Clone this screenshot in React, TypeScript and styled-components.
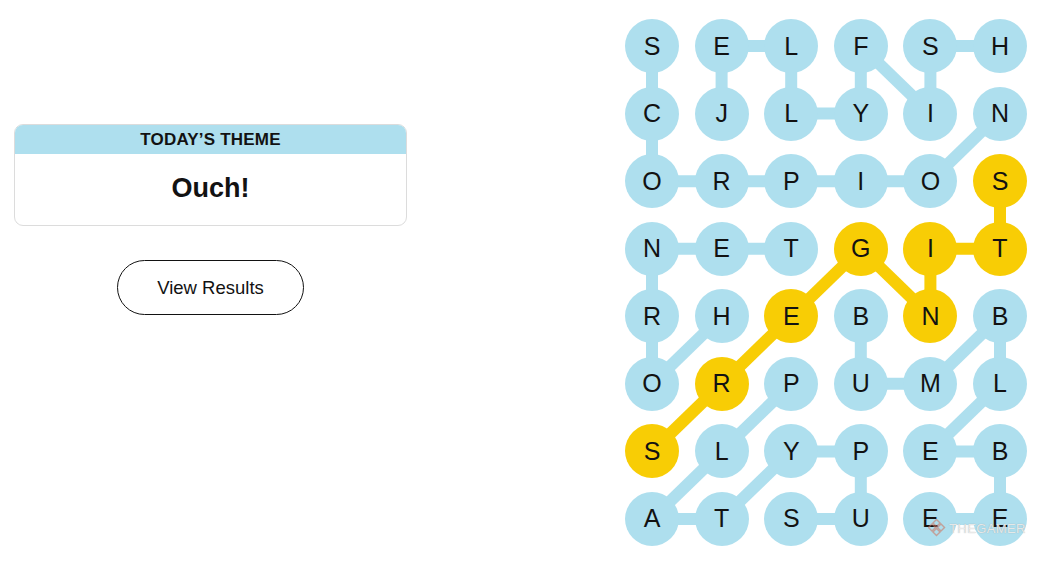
import React from "react";
import styled, { createGlobalStyle } from "styled-components";

const GlobalStyle = createGlobalStyle`
  html, body { margin: 0; padding: 0; background: #ffffff; }
  body { font-family: "Liberation Sans", Arial, sans-serif; color: #121212; }
`;

const COL = 69.6;
const ROW = 67.57;
const R = 27;
const BLUE = "#aedfee";
const YELLOW = "#f8cd05";

const LETTERS = [
  "SELFSH",
  "CJLYIN",
  "ORPIOS",
  "NETGIT",
  "RHEBNB",
  "ORPUML",
  "SLYPEB",
  "ATSUEE",
];

type Pt = [number, number];
type Word = { path: Pt[]; spangram?: boolean };

const WORDS: Word[] = [
  { path: [[0, 0], [0, 1], [0, 2], [1, 2], [2, 2], [3, 2], [4, 2], [5, 1]] },
  { path: [[1, 1], [1, 0], [2, 0], [2, 1], [3, 1], [3, 0], [4, 1], [4, 0], [5, 0]] },
  { path: [[1, 4], [0, 5], [0, 4], [0, 3], [1, 3], [2, 3]] },
  { path: [[2, 5], [1, 6], [0, 7], [1, 7], [2, 6], [3, 6], [3, 7], [2, 7]] },
  { path: [[3, 4], [3, 5], [4, 5], [5, 4], [5, 5], [4, 6], [5, 6], [5, 7], [4, 7]] },
  { path: [[0, 6], [1, 5], [2, 4], [3, 3], [4, 4], [4, 3], [5, 3], [5, 2]], spangram: true },
];

const spangramCells = new Set(
  WORDS.filter((w) => w.spangram).flatMap((w) => w.path.map(([c, r]) => `${c},${r}`))
);

const Page = styled.main`
  display: flex;
  width: 1053px;
  height: 563px;
  box-sizing: border-box;
  padding-right: 26px;
  overflow: hidden;
`;

const Side = styled.section`
  width: 421px;
  box-sizing: border-box;
  padding: 124px 14px 0;
  display: flex;
  flex-direction: column;
  align-items: center;
  gap: 34px;
`;

const ThemeCard = styled.div`
  width: 100%;
  border: 1px solid #dcdcdc;
  border-radius: 9px;
  overflow: hidden;
  box-sizing: border-box;
`;

const ThemeHeader = styled.div`
  height: 29px;
  background: ${BLUE};
  display: flex;
  align-items: center;
  justify-content: center;
  font-weight: 700;
  font-size: 17px;
  letter-spacing: 0.2px;
  color: #121212;
`;

const ThemeTitle = styled.div`
  height: 71px;
  display: flex;
  align-items: center;
  justify-content: center;
  font-weight: 700;
  font-size: 27px;
  color: #121212;
  padding-bottom: 2px;
  box-sizing: border-box;
`;

const ResultsButton = styled.button`
  width: 187px;
  height: 55px;
  border: 1px solid #121212;
  border-radius: 28px;
  background: #ffffff;
  font-family: "Liberation Sans", Arial, sans-serif;
  font-size: 18.5px;
  color: #121212;
  cursor: pointer;
`;

const BoardWrap = styled.section`
  margin-left: auto;
  padding-top: 19px;
`;

const Board = styled.div`
  position: relative;
  display: grid;
  grid-template-columns: repeat(6, ${R * 2}px);
  grid-auto-rows: ${R * 2}px;
  column-gap: ${COL - R * 2}px;
  row-gap: ${ROW - R * 2}px;
`;

const Connectors = styled.svg`
  position: absolute;
  inset: 0;
  width: 100%;
  height: 100%;
  z-index: 0;
  overflow: visible;
`;

const Cell = styled.div<{ $spangram: boolean }>`
  position: relative;
  z-index: 1;
  width: ${R * 2}px;
  height: ${R * 2}px;
  border-radius: 50%;
  background: ${(p) => (p.$spangram ? YELLOW : BLUE)};
  display: flex;
  align-items: center;
  justify-content: center;
  font-family: "Liberation Sans", Arial, sans-serif;
  font-size: 25px;
  color: #121212;
  line-height: 1;
`;

const Watermark = styled.div`
  position: absolute;
  left: 303px;
  top: 500px;
  z-index: 2;
  display: flex;
  align-items: center;
  gap: 3px;
  font-family: "Liberation Sans", Arial, sans-serif;
  font-size: 13px;
  letter-spacing: 0.4px;
  color: rgba(240, 240, 240, 0.9);
  text-shadow: 0 0 1px rgba(140, 140, 140, 0.7);
  pointer-events: none;
`;

const cx = (c: number) => R + c * COL;
const cy = (r: number) => R + r * ROW;

export default function App() {
  return (
    <>
      <GlobalStyle />
      <Page>
        <Side>
          <ThemeCard>
            <ThemeHeader>TODAY’S THEME</ThemeHeader>
            <ThemeTitle>Ouch!</ThemeTitle>
          </ThemeCard>
          <ResultsButton>View Results</ResultsButton>
        </Side>
        <BoardWrap>
          <Board>
            <Connectors>
              {WORDS.map((w, i) =>
                w.path.slice(1).map(([c, r], j) => {
                  const [pc, pr] = w.path[j];
                  return (
                    <line
                      key={`${i}-${j}`}
                      x1={cx(pc)}
                      y1={cy(pr)}
                      x2={cx(c)}
                      y2={cy(r)}
                      stroke={w.spangram ? YELLOW : BLUE}
                      strokeWidth={12}
                    />
                  );
                })
              )}
            </Connectors>
            {LETTERS.map((row, r) =>
              row.split("").map((ch, c) => (
                <Cell key={`${c}-${r}`} $spangram={spangramCells.has(`${c},${r}`)}>
                  {ch}
                </Cell>
              ))
            )}
            <Watermark>
              <svg width="18" height="18" viewBox="0 0 18 18">
                <g fill="none" stroke="rgba(205,120,100,0.6)" strokeWidth="1.4">
                  <rect x="6" y="1.5" width="5" height="5" transform="rotate(45 8.5 4)" />
                  <rect x="1.5" y="6" width="5" height="5" transform="rotate(45 4 8.5)" />
                  <rect x="10.5" y="6" width="5" height="5" transform="rotate(45 13 8.5)" />
                  <rect x="6" y="10.5" width="5" height="5" transform="rotate(45 8.5 13)" />
                </g>
              </svg>
              THEGAMER
            </Watermark>
          </Board>
        </BoardWrap>
      </Page>
    </>
  );
}
